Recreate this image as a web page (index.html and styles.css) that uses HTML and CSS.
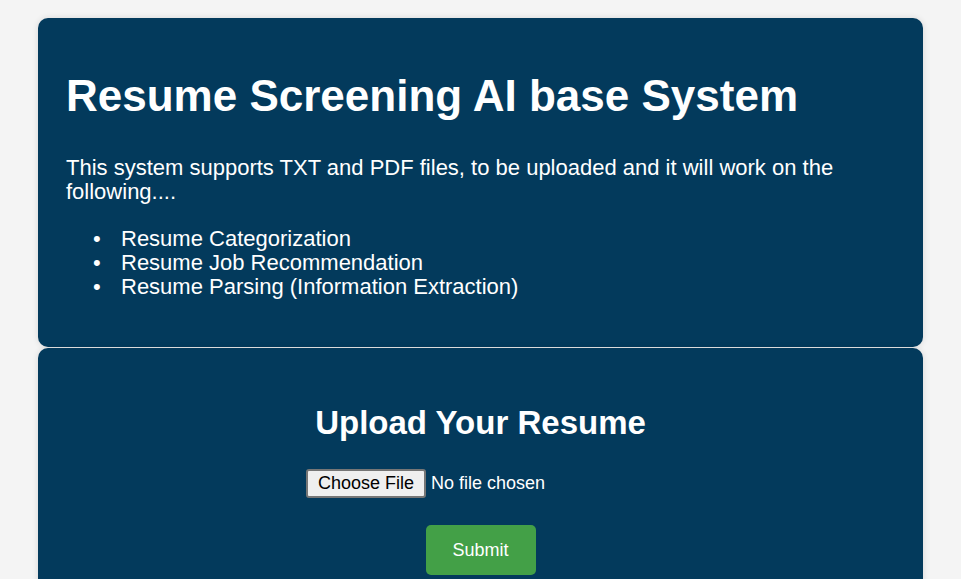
FILE: index.html
```html
<!DOCTYPE html>
<html lang="en">
<head>
<meta charset="utf-8">
<title>Resume Screening AI base System</title>
<link rel="stylesheet" href="styles.css">
</head>
<body>
<div class="container">
  <section class="card intro">
    <h1>Resume Screening AI base System</h1>
    <p>This system supports TXT and PDF files, to be uploaded and it will work on the following....</p>
    <ul>
      <li>Resume Categorization</li>
      <li>Resume Job Recommendation</li>
      <li>Resume Parsing (Information Extraction)</li>
    </ul>
  </section>
  <section class="card upload">
    <h2>Upload Your Resume</h2>
    <form class="upload-form">
      <input type="file" class="file-input" name="resume" accept=".pdf,.txt">
      <button type="button" class="submit">Submit</button>
    </form>
  </section>
</div>
</body>
</html>
```
FILE: styles.css
```css
html, body {
  margin: 0;
  padding: 0;
}
body {
  background: #f4f4f4;
  font-family: "Liberation Sans", Arial, sans-serif;
  color: #ffffff;
}
.container {
  width: 885px;
  margin: 18px auto 0;
}
.card {
  background: #033a5c;
  border-radius: 10px;
  padding: 20px 28px;
  box-shadow: 0 0 6px rgba(0, 0, 0, 0.12);
}
.intro {
  margin-bottom: 1px;
}
.intro h1 {
  font-size: 44px;
  margin: 33px 0 35px;
}
.intro p {
  font-size: 22px;
  line-height: 24px;
  margin: 0 0 23px;
}
.intro ul {
  font-size: 22px;
  line-height: 24px;
  margin: 0 0 28px;
  padding-left: 55px;
  list-style: none;
}
.intro li::before {
  content: "\2022";
  display: inline-block;
  width: 28px;
  margin-left: -28px;
}
.upload {
  text-align: center;
  padding-bottom: 40px;
}
.upload h2 {
  font-size: 33px;
  margin: 36px 0 27px;
}
.upload-form {
  display: flex;
  flex-direction: column;
  align-items: center;
  gap: 27px;
}
.file-input {
  width: 349px;
  font-family: "Liberation Sans", Arial, sans-serif;
  font-size: 18px;
  color: #ffffff;
  margin: 0;
}
.file-input::file-selector-button {
  font-family: "Liberation Sans", Arial, sans-serif;
  font-size: 18px;
  color: #000000;
  background: #efefef;
  border: 2px solid #767676;
  border-radius: 3px;
  padding: 2px 10px;
  margin-right: 5px;
}
.submit {
  background: #43a047;
  color: #ffffff;
  border: none;
  border-radius: 5px;
  width: 110px;
  height: 50px;
  font-family: "Liberation Sans", Arial, sans-serif;
  font-size: 18px;
}
```
